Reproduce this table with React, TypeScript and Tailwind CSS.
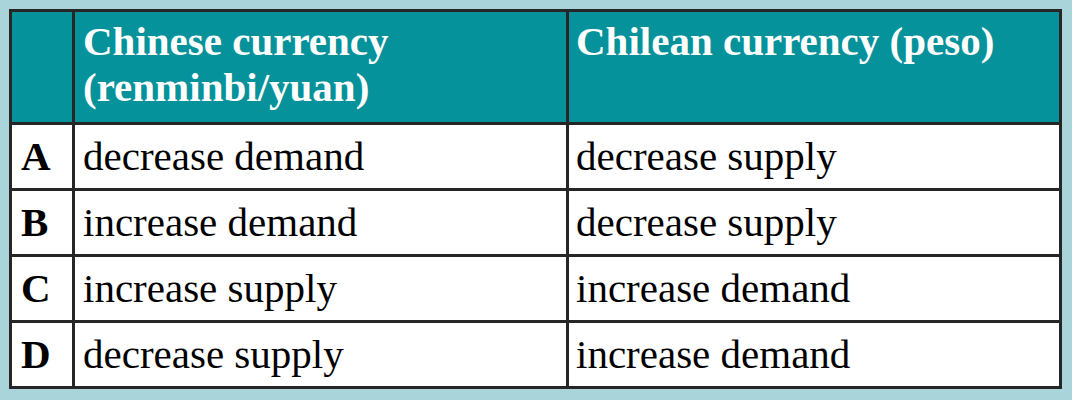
const rows = [
  { key: "A", chinese: "decrease demand", chilean: "decrease supply" },
  { key: "B", chinese: "increase demand", chilean: "decrease supply" },
  { key: "C", chinese: "increase supply", chilean: "increase demand" },
  { key: "D", chinese: "decrease supply", chilean: "increase demand" },
];

export default function App() {
  return (
    <div
      className="h-[400px] w-[1072px] bg-[#a9d4da] pl-[9px] pt-[9px]"
      style={{ fontFamily: '"Liberation Serif", "Times New Roman", serif' }}
    >
      <div className="grid w-[1053px] grid-cols-[60px_491px_490px] gap-[3px] bg-[#262626] p-[3px] text-[41px]">
        {/* Header */}
        <div className="h-[110px] bg-[#05929a]" />
        <div className="h-[110px] bg-[#05929a] pl-2 pt-[6px] font-bold leading-[46px] text-white">
          Chinese currency
          <br />
          (renminbi/yuan)
        </div>
        <div className="h-[110px] bg-[#05929a] pl-[7px] pt-[6px] font-bold leading-[46px] text-white">
          Chilean currency (peso)
        </div>

        {/* Body */}
        {rows.map((row) => (
          <div key={row.key} className="contents">
            <div className="flex h-[63px] items-center bg-white pl-[9px] font-bold leading-[45px] text-black">
              {row.key}
            </div>
            <div className="flex h-[63px] items-center bg-white pl-2 leading-[45px] text-black">
              {row.chinese}
            </div>
            <div className="flex h-[63px] items-center bg-white pl-[7px] leading-[45px] text-black">
              {row.chilean}
            </div>
          </div>
        ))}
      </div>
    </div>
  );
}
